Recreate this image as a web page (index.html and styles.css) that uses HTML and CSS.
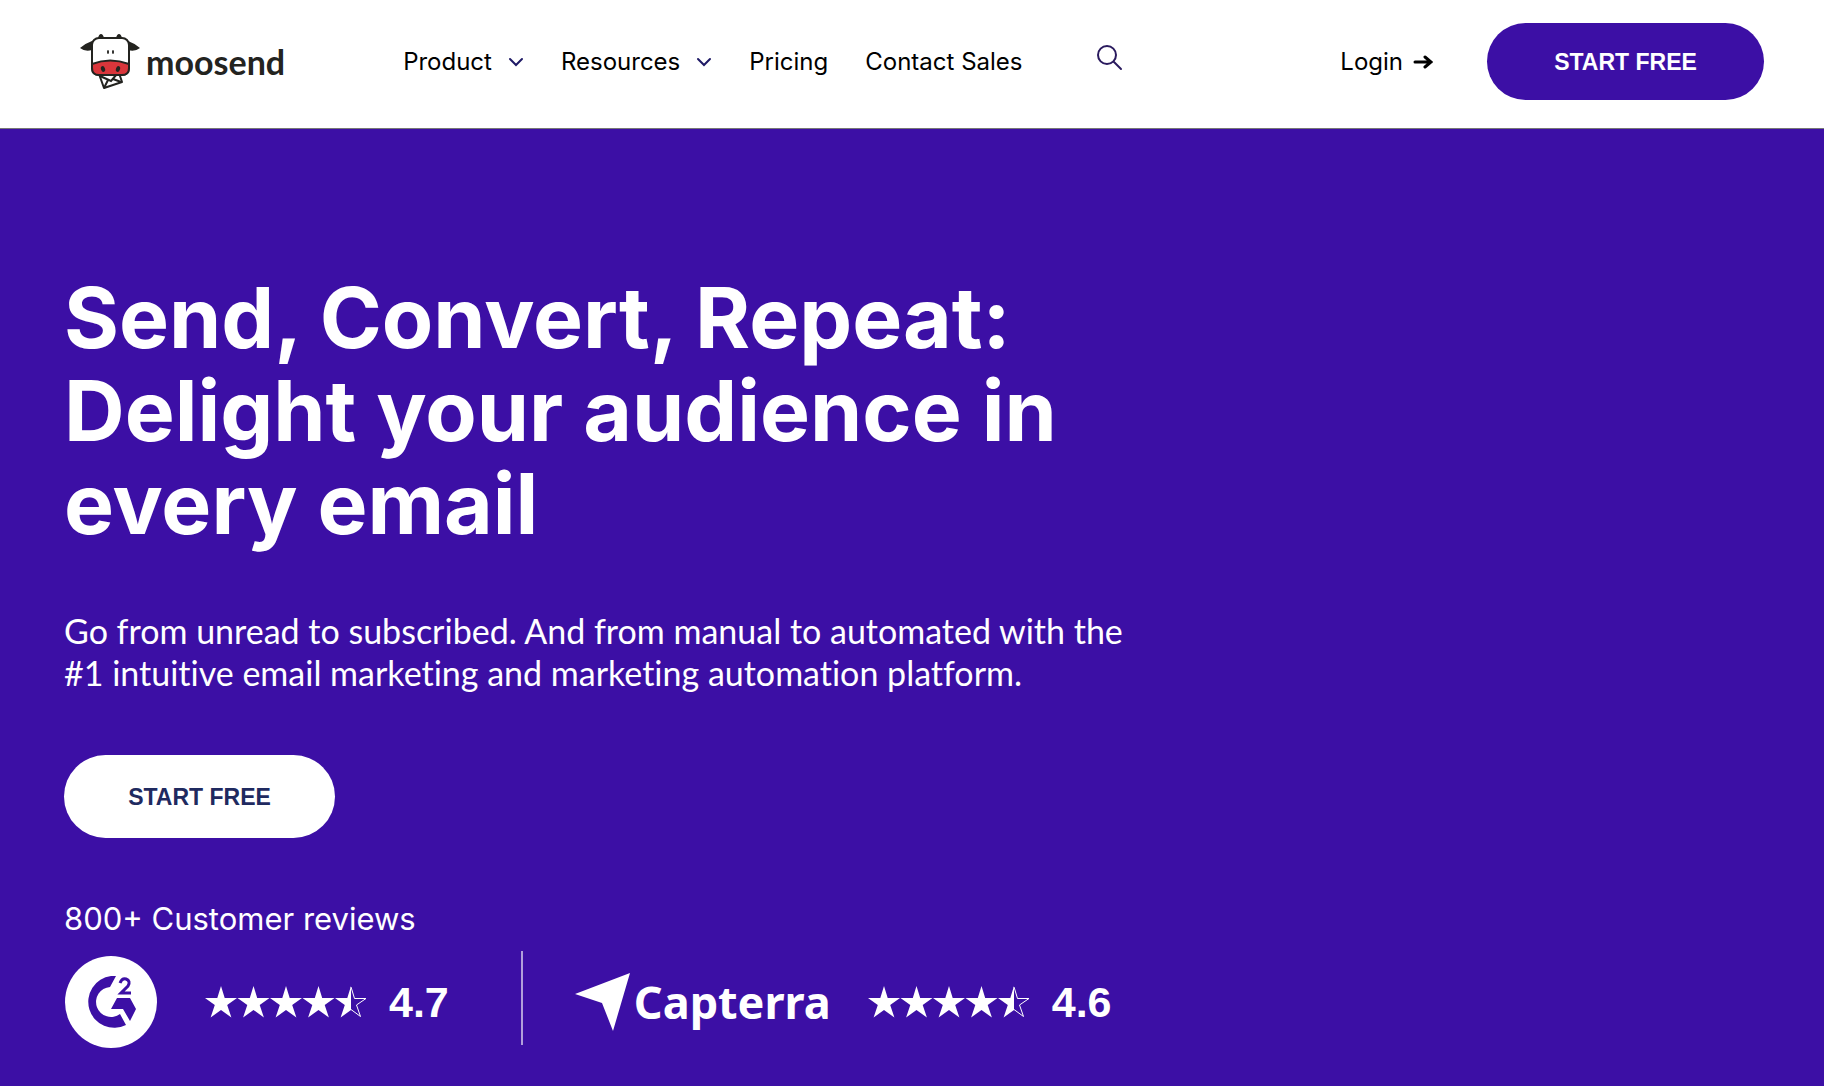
FILE: index.html
```html
<!DOCTYPE html>
<html lang="en">
<head>
<meta charset="utf-8">
<title>Moosend – Email Marketing</title>
<link rel="stylesheet" href="styles.css">
</head>
<body>
<header class="site-header">
  <a class="brand" href="#" aria-label="moosend">
    <svg class="cow" viewBox="0 0 60 56" width="60" height="56" aria-hidden="true">
      <path d="M0 14Q6 9 12 7L18 4Q13 8 12 16Q5 18 0 14ZM60 14Q54 9 48 7L42 4Q47 8 48 16Q55 18 60 14Z" fill="#23231f"/>
      <path d="M18 4Q19 0 21 0Q23 0 24 4ZM36 4Q37 0 39 0Q41 0 42 4Z" fill="#23231f"/>
      <path d="M19 40L24 54L42 48L39 39Z" fill="#fff" stroke="#23231f" stroke-width="2" stroke-linejoin="round"/>
      <path d="M20 42L31 47L37 40M28 46L24 54M33 45L41 48" fill="none" stroke="#23231f" stroke-width="2"/>
      <rect x="12" y="4" width="37" height="37" rx="7" fill="#fff" stroke="#23231f" stroke-width="2"/>
      <path d="M12 30Q30 23 49 30V34Q49 41 42 41H19Q12 41 12 34Z" fill="#d9363b" stroke="#23231f" stroke-width="2"/>
      <g fill="#23231f"><ellipse cx="28" cy="18" rx="1" ry="2"/><ellipse cx="33" cy="18" rx="1" ry="2"/><ellipse cx="23" cy="35" rx="2" ry="3" transform="rotate(-20 23 35)"/><ellipse cx="38" cy="35" rx="2" ry="3" transform="rotate(20 38 35)"/></g>
    </svg>
    <span class="brand-name">moosend</span>
  </a>
  <nav class="main-nav" aria-label="Main">
    <a href="#">Product <svg class="chevron" viewBox="0 0 16 10" width="16" height="10" aria-hidden="true"><path d="M2 2L8 8L14 2"/></svg></a>
    <a href="#">Resources <svg class="chevron" viewBox="0 0 16 10" width="16" height="10" aria-hidden="true"><path d="M2 2L8 8L14 2"/></svg></a>
    <a href="#">Pricing</a>
    <a href="#">Contact Sales</a>
  </nav>
  <button class="search" type="button" aria-label="Search"><svg viewBox="0 0 28 28" width="28" height="28" aria-hidden="true"><circle cx="11" cy="11" r="9"/><path d="M18 18L25 25"/></svg></button>
  <div class="account">
    <a class="login" href="#">Login <svg viewBox="0 0 20 16" width="20" height="16" aria-hidden="true"><path d="M2 8H18M12 3L18 8L12 13"/></svg></a>
    <a class="cta cta-header" href="#">START FREE</a>
  </div>
</header>
<main class="hero">
  <h1>Send, Convert, Repeat:<br>Delight your audience in<br>every email</h1>
  <p class="lead">Go from unread to subscribed. And from manual to automated with the<br>#1 intuitive email marketing and marketing automation platform.</p>
  <a class="cta cta-hero" href="#">START FREE</a>
  <section class="reviews" aria-label="Customer reviews">
    <p class="reviews-title">800+ Customer reviews</p>
    <div class="ratings">
      <svg class="g2" viewBox="0 0 92 92" width="92" height="92" role="img" aria-label="G2">
        <circle cx="46" cy="46" r="46" fill="#fff"/>
        <path d="M51 20H46A26 26 0 1 0 61 69L55 58A15 15 0 1 1 45 31Z" fill="#3c0fa5"/>
        <path d="M52 42H65L71 53L65 65L58 53H46Z" fill="#3c0fa5"/>
        <path d="M55 27Q57 22 61 23Q66 25 63 30L56 37H66" fill="none" stroke="#3c0fa5" stroke-width="3"/>
      </svg>
      <svg class="stars" viewBox="0 0 162 32" width="162" height="32" role="img" aria-label="4.7 stars">
        <defs><path id="star" d="M16 0L19.700 12H32L22.200 19L26.400 31.500L16 24L5.600 31.500L9.800 19L0 12H12.300Z"/></defs>
        <g fill="#fff"><use href="#star"/><use href="#star" x="32.500"/><use href="#star" x="65"/><use href="#star" x="97.500"/><path d="M146 0V24L135.600 31.500L139.800 19L130 12H142.300Z"/></g>
        <path d="M146 1L149.500 12.500H161L151.500 19L155.500 30.500L146 23.500" fill="none" stroke="#fff"/>
      </svg>
      <span class="score">4.7</span>
      <span class="divider"></span>
      <span class="capterra"><svg viewBox="0 0 56 58" width="56" height="58" aria-hidden="true"><path d="M0 21L55 0L38 58L27 30Z" fill="#fff"/></svg>Capterra</span>
      <svg class="stars stars-capterra" viewBox="0 0 162 32" width="162" height="32" role="img" aria-label="4.6 stars">
        <g fill="#fff"><use href="#star"/><use href="#star" x="32.500"/><use href="#star" x="65"/><use href="#star" x="97.500"/><path d="M146 0V24L135.600 31.500L139.800 19L130 12H142.300Z"/></g>
        <path d="M146 1L149.500 12.500H161L151.500 19L155.500 30.500L146 23.500" fill="none" stroke="#fff"/>
      </svg>
      <span class="score">4.6</span>
    </div>
  </section>
</main>
</body>
</html>
```
FILE: styles.css
```css
*{box-sizing:border-box}
body{margin:0;background:#3c0fa5;color:#000;font-family:Inter,"Liberation Sans",sans-serif}
a{color:inherit;text-decoration:none}
h1,p{margin:0}
.site-header{display:flex;align-items:center;height:129px;padding:0 60px 5px 80px;background:#fff;border-bottom:1px solid #777}
.brand{display:flex;align-items:center;gap:6px}
.brand-name{font:700 34px/44px Lato,sans-serif;color:#23231f}
.main-nav{display:flex;gap:37px;margin-left:118px;font-size:24px;line-height:32px}
.main-nav a{display:flex;align-items:center;gap:16px}
.chevron,.search svg,.login svg{fill:none;stroke:#1f1a66;stroke-width:2;stroke-linecap:round}
.search{margin:0 0 8px 74px;padding:0;border:0;background:none;line-height:0}
.search svg{stroke:#2a1a5e}
.account{display:flex;align-items:center;gap:54px;margin-left:auto}
.login{display:flex;align-items:center;gap:10px;font-size:24px;line-height:32px}
.login svg{stroke:#000;stroke-width:3}
.cta{display:flex;align-items:center;justify-content:center;border-radius:42px;font:700 23px/32px "Liberation Sans",sans-serif}
.cta-header{width:277px;height:77px;background:#3c0fa5;color:#fff}
.cta-hero{width:271px;height:83px;margin-top:61px;background:#fff;color:#1f2a60}
.hero{padding:142px 64px 32px;color:#fff}
h1{font-size:84px;line-height:93px;font-weight:700}
.lead{margin-top:60px;font:34px/42px Lato,sans-serif;font-variant-ligatures:none}
.reviews{margin-top:61px}
.reviews-title{font-size:31px;line-height:40px}
.ratings{display:flex;align-items:center;margin-top:12px}
.g2{margin-left:1px}
.stars{margin-left:48px}
.stars-capterra{margin-left:37px}
.score{margin-left:22px;font:700 43px/52px "Liberation Sans",sans-serif}
.divider{width:2px;height:94px;margin:0 52px 8px 72px;background:#b19fdb}
.capterra{display:flex;align-items:center;gap:3px;font:700 45px/56px "Noto Sans",sans-serif}
```
